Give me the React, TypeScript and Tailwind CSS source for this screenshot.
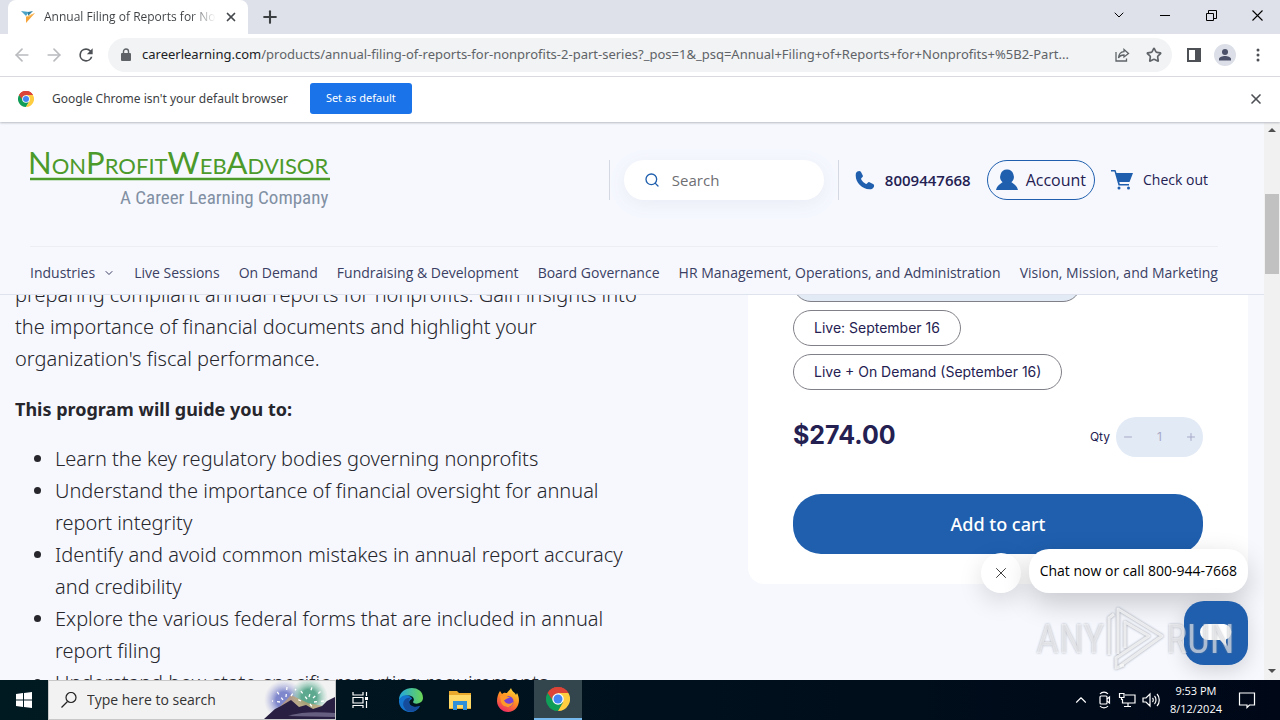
import {
    ArrowLeft,
    ArrowRight,
    ChevronDown,
    ChevronUp,
    Minus,
    Plus,
    Search,
    Star,
    X,
} from "lucide-react";

const navLinks = [
    "Live Sessions",
    "On Demand",
    "Fundraising & Development",
    "Board Governance",
    "HR Management, Operations, and Administration",
    "Vision, Mission, and Marketing",
];

const goals = [
    "Learn the key regulatory bodies governing nonprofits",
    "Understand the importance of financial oversight for annual report integrity",
    "Identify and avoid common mistakes in annual report accuracy and credibility",
    "Explore the various federal forms that are included in annual report filing",
    "Understand how state-specific reporting requirements",
];

function ChromeLogo({ className }: { className: string }) {
    return (
        <svg viewBox="0 0 48 48" className={className} aria-hidden="true">
            <path d="M24 24 3.2 12A24 24 0 0 1 44.8 12Z" fill="#db4437" />
            <path d="M24 24 3.2 12A24 24 0 0 0 24 48L34.4 30Z" fill="#0f9d58" />
            <path d="M24 24 34.4 30 24 48A24 24 0 0 0 44.8 12H24Z" fill="#ffcd40" />
            <path d="M3.2 12 13.6 30 24 24V13Z" fill="#0f9d58" />
            <path d="M3.2 12A24 24 0 0 1 44.8 12H24L13.6 18 13 26Z" fill="#db4437" />
            <circle cx="24" cy="24" r="11.5" fill="#fff" />
            <circle cx="24" cy="24" r="9" fill="#4285f4" />
        </svg>
    );
}

function TabStrip() {
    return (
        <div className="flex h-[34px] shrink-0 items-stretch bg-[#dee1e9] pl-2">
            <div className="flex w-60 items-center rounded-t-lg bg-white pl-3 pr-2">
                <svg viewBox="0 0 16 16" className="size-4 shrink-0" aria-hidden="true">
                    <path d="M1 2 9 3 6 7Z" fill="#4aa3c7" />
                    <path d="M8 3 13 2 8 7Z" fill="#2f7f9f" />
                    <path d="M15 4 6 14V8Z" fill="#f5a43a" />
                    <path d="M5 8 15 4 9 8Z" fill="#fbc26b" />
                </svg>
                <span className="ml-2 w-[172px] overflow-hidden whitespace-nowrap bg-linear-to-r from-[#3c4043] from-85% to-transparent bg-clip-text text-xs text-transparent">
                    Annual Filing of Reports for Nonprofits
                </span>
                <button aria-label="Close tab" className="ml-2 text-[#45494d]">
                    <X className="size-3.5" strokeWidth={3} />
                </button>
            </div>
            <button aria-label="New tab" className="ml-3 text-[#3c4043]">
                <Plus className="size-5" strokeWidth={2.5} />
            </button>
            <div className="ml-auto flex items-center pb-1 text-black">
                <button aria-label="Search tabs" className="flex w-[46px] justify-center">
                    <ChevronDown className="size-4" strokeWidth={1.5} />
                </button>
                <button aria-label="Minimize" className="flex w-[46px] justify-center">
                    <svg viewBox="0 0 10 10" className="size-2.5"><path d="M0 5.5H10" stroke="currentColor" /></svg>
                </button>
                <button aria-label="Restore" className="flex w-[46px] justify-center">
                    <svg viewBox="0 0 11 11" className="size-[11px]" fill="none" stroke="currentColor">
                        <path d="M.5 3.5H7.5V10.5H.5ZM2.5 3V.5H10.5V8.5H8" />
                    </svg>
                </button>
                <button aria-label="Close" className="flex w-[46px] justify-center">
                    <svg viewBox="0 0 11 11" className="size-[11px]"><path d="M.5.5 10.5 10.5M10.5.5.5 10.5" stroke="currentColor" strokeWidth="1.1" /></svg>
                </button>
            </div>
        </div>
    );
}

function AddressBar() {
    return (
        <div className="flex h-[43px] shrink-0 items-center border-b border-[#dcdde0] bg-white px-3 text-[#5f6368]">
            <button aria-label="Back" className="text-[#b9bbbe]"><ArrowLeft className="size-5" strokeWidth={2} /></button>
            <button aria-label="Forward" className="ml-3 text-[#b9bbbe]"><ArrowRight className="size-5" strokeWidth={2} /></button>
            <button aria-label="Reload" className="ml-3">
                <svg viewBox="0 0 24 24" className="size-5" fill="#4d5156" aria-hidden="true">
                    <path d="M17.65 6.35A7.96 7.96 0 0 0 12 4a8 8 0 1 0 7.73 10h-2.08A6 6 0 1 1 12 6c1.66 0 3.14.69 4.22 1.78L13 11h7V4z" />
                </svg>
            </button>
            <div className="ml-3 flex h-[34px] min-w-0 flex-1 items-center rounded-full bg-[#f1f3f4] pl-3 pr-2.5">
                <svg viewBox="0 0 12 14" className="h-3.5 w-3 shrink-0" aria-hidden="true">
                    <path d="M2 5H10Q11 5 11 6V12Q11 13 10 13H2Q1 13 1 12V6Q1 5 2 5Z" fill="#5f6368" />
                    <path d="M3.500 6V3.500A2.500 2.500 0 0 1 8.500 3.500V6" fill="none" stroke="#5f6368" strokeWidth="1.400" />
                </svg>
                <p className="ml-2.5 min-w-0 flex-1 truncate font-['Noto_Sans',sans-serif] text-[13px]">
                    <span className="text-[#202124]">careerlearning.com</span>
                    /products/annual-filing-of-reports-for-nonprofits-2-part-series?_pos=1&amp;_psq=Annual+Filing+of+Reports+for+Nonprofits+%5B2-Part...
                </p>
                <button aria-label="Share" className="ml-4">
                    <svg viewBox="0 0 16 16" className="size-4" fill="none" stroke="currentColor" strokeWidth="1.3">
                        <path d="M2 5V14H12.500V11.500M10 2.500 14.500 6.500 10 10V8C7 8 5.500 9 4.500 11 4.800 7.500 6.500 5 10 4.700Z" />
                    </svg>
                </button>
                <button aria-label="Bookmark" className="ml-4"><Star className="size-4" strokeWidth={2.5} /></button>
            </div>
            <button aria-label="Side panel" className="ml-3.5">
                <svg viewBox="0 0 16 16" className="size-4"><path d="M1 1H15V15H1ZM3 3V13H9V3Z" fill="#4d5156" fillRule="evenodd" /></svg>
            </button>
            <button aria-label="Profile" className="ml-3 flex size-[22px] items-center justify-center rounded-full bg-[#dcdfe8]">
                <svg viewBox="0 0 14 14" className="size-3.5" fill="#4a5168"><circle cx="7" cy="4" r="3" /><path d="M1 12.500V11C1 9 4.500 8 7 8S13 9 13 11V12.500Z" /></svg>
            </button>
            <button aria-label="Menu" className="ml-3">
                <svg viewBox="0 0 20 16" className="h-4 w-5" fill="#4d5156"><circle cx="10" cy="3" r="1.500" /><circle cx="10" cy="8" r="1.500" /><circle cx="10" cy="13" r="1.500" /></svg>
            </button>
        </div>
    );
}

function DefaultBrowserBar() {
    return (
        <div className="relative z-20 flex h-[45px] shrink-0 items-center bg-white pb-0.5 pl-[18px] pr-4 font-['Noto_Sans',sans-serif] text-xs text-[#3c4043] shadow-[0_1px_2px_#b9bbc2]">
            <ChromeLogo className="size-4" />
            <p className="ml-[18px]">Google Chrome isn't your default browser</p>
            <button className="ml-[22px] h-[31px] rounded-[3px] bg-[#1a73e8] px-4 text-[11px] text-white">Set as default</button>
            <button aria-label="Dismiss" className="ml-auto text-[#4d5156]"><X className="size-4" strokeWidth={2.5} /></button>
        </div>
    );
}

function Logo() {
    return (
        <a href="#" aria-label="NonProfitWebAdvisor, A Career Learning Company">
            <svg viewBox="0 0 300 60" className="h-[60px] w-[300px] overflow-visible">
                <text x="-2" y="24" fill="#4c9a2a" fontFamily="Lato" fontSize="22">
                    <tspan fontSize="31">N</tspan>ON<tspan fontSize="31">P</tspan>ROFIT<tspan fontSize="31">W</tspan>EB<tspan fontSize="31">A</tspan>DVISOR
                </text>
                <path d="M0 29H300" stroke="#4c9a2a" strokeWidth="2.500" />
                <text x="90" y="54" fill="#8290a3" fontFamily="'Roboto Condensed', Roboto" fontSize="19">A Career Learning Company</text>
            </svg>
        </a>
    );
}

function Header() {
    return (
        <header className="relative z-10 border-b border-[#dfe3ee] bg-[#f6f8fe] pl-[30px] pr-[46px] text-[#242152]">
            <div className="flex h-[125px] items-start border-b border-[#eceef4] pt-7">
                <Logo />
                <div className="ml-auto mt-2.5 flex h-10 items-center">
                    <div className="flex h-10 items-center border-x border-[#d4d8e2] px-3.5">
                        <label className="flex h-10 w-[200px] items-center rounded-full bg-white px-5 shadow-[0_4px_18px_#e9ecf5]">
                            <Search className="size-4 shrink-0 text-[#1f5fae]" strokeWidth={2} />
                            <input type="search" aria-label="Search" placeholder="Search" className="ml-3 w-full min-w-0 text-[15px] outline-none placeholder:text-[#6e6e73]" />
                        </label>
                    </div>
                    <a href="#" className="ml-4 flex items-center text-[15px] font-semibold">
                        <svg viewBox="0 0 20 20" className="mr-2.5 size-5" fill="#1f5fae" aria-hidden="true">
                            <path d="M1 3C2 1 5 0 6 2L8 6C8 7 6 8 6 9 7 11 9 13 11 14 12 14 13 12 14 12L18 14C20 15 19 18 17 19 8 21-1 12 1 3Z" />
                        </svg>
                        8009447668
                    </a>
                    <a href="#" className="ml-4 flex h-10 items-center rounded-full border border-[#1f5fae] px-2 text-base">
                        <svg viewBox="0 0 20 20" className="mr-2 size-[22px]" fill="#1f5fae" aria-hidden="true">
                            <path d="M10 .5A6 6.500 0 0 1 14 12C16 13.500 19 15 20 19H0C1 15 4 13.500 6 12A6 6.500 0 0 1 10 .5Z" />
                        </svg>
                        Account
                    </a>
                    <a href="#" className="ml-4 mr-2.5 flex items-center text-sm">
                        <svg viewBox="0 0 22 20" className="mr-2.5 h-5 w-[22px]" fill="#1f5fae" aria-hidden="true">
                            <path d="M0 0H4.500L5.500 3H22L18.500 12H8.300L8.800 14H18V15.500H7.500L3.500 1.500H0Z" />
                            <circle cx="8" cy="18" r="1.500" /><circle cx="17.500" cy="18" r="1.500" />
                        </svg>
                        Check out
                    </a>
                </div>
            </div>
            <nav className="flex h-[47px] items-center justify-between whitespace-nowrap pt-1 text-sm text-[#3b3f63]">
                <a href="#" className="flex items-center">
                    Industries <ChevronDown className="ml-2 size-3" strokeWidth={2} />
                </a>
                {navLinks.map((link) => (
                    <a key={link} href="#">{link}</a>
                ))}
            </nav>
        </header>
    );
}

function Description() {
    return (
        <div className="-mt-4 min-w-0 max-w-[640px] flex-1 font-['Noto_Sans',sans-serif] text-[20px] leading-8 font-light text-[#26262c]">
            <p>
                preparing compliant annual reports for nonprofits. Gain insights into the importance of financial
                documents and highlight your organization's fiscal performance.
            </p>
            <p className="mt-[18px] text-lg leading-8 font-bold">This program will guide you to:</p>
            <ul className="mt-[18px] list-disc pl-10">
                {goals.map((goal) => (
                    <li key={goal}>{goal}</li>
                ))}
            </ul>
        </div>
    );
}

function VariantOption({ label, checked }: { label: string; checked?: boolean }) {
    return (
        <label className="flex h-9 items-center rounded-full border border-[#7f8088] px-5 text-sm has-checked:bg-[#e2eaf6]">
            <input type="radio" name="variant" defaultChecked={checked} className="sr-only" />
            {label}
        </label>
    );
}

function PurchaseCard() {
    return (
        <div className="-mt-[29px] w-[500px] shrink-0 self-start rounded-2xl bg-white px-[45px] pb-[30px] font-['Inter',sans-serif] text-[#242152]">
            <div className="flex flex-col items-start gap-2">
                <VariantOption label="On Demand (Available September 16)" checked />
                <VariantOption label="Live: September 16" />
                <VariantOption label="Live + On Demand (September 16)" />
            </div>
            <div className="mt-[27px] flex h-10 items-center">
                <p className="self-start text-[25px] font-bold">$274.00</p>
                <label htmlFor="qty" className="ml-auto text-xs">Qty</label>
                <div className="ml-1.5 flex h-10 w-[87px] items-center justify-between rounded-full bg-[#e2eaf6] px-1.5 text-[#a7a9c8]">
                    <button aria-label="Decrease quantity"><Minus className="size-3" /></button>
                    <input id="qty" defaultValue="1" className="w-6 text-center text-xs outline-none" />
                    <button aria-label="Increase quantity"><Plus className="size-3" /></button>
                </div>
            </div>
            <button className="mt-[37px] h-[60px] w-full rounded-[28px] bg-[#1f5fae] font-['Noto_Sans',sans-serif] text-lg font-medium text-white">Add to cart</button>
        </div>
    );
}

function Watermark() {
    return (
        <svg viewBox="0 0 200 70" className="pointer-events-none absolute bottom-1.5 right-[26px] z-20 h-[70px] w-[200px] overflow-visible drop-shadow-[0_0_1px_#777c88]" aria-hidden="true">
            <g fill="#fff" fillOpacity=".55" fontFamily="'Roboto Condensed', Roboto" fontSize="40">
                <text x="-2" y="49">ANY</text>
                <text x="128" y="49">RUN</text>
            </g>
            <g fill="none" stroke="#fff" strokeOpacity=".75" strokeWidth="3" strokeLinejoin="round">
                <path d="M71 51V14L76 10M80 50V5L124 32 82 62" />
                <path d="M87 44V18L111 32 78 54V64L86 61" />
            </g>
        </svg>
    );
}

function ChatWidget() {
    return (
        <div className="absolute bottom-[15px] right-4 z-10 flex flex-col items-end gap-2 text-black">
            <div className="flex items-end gap-2">
                <button aria-label="Close chat message" className="flex size-10 items-center justify-center rounded-full bg-white shadow-[0_8px_24px_#00000022]">
                    <X className="size-[18px]" strokeWidth={1} />
                </button>
                <p className="flex h-11 items-center rounded-[20px] bg-white px-[11px] text-sm shadow-[0_10px_28px_#00000033]">Chat now or call 800-944-7668</p>
            </div>
            <button aria-label="Open chat" className="flex size-16 items-center justify-center rounded-[20px] bg-[#1f5fae] shadow-[0_6px_20px_#00000026]">
                <svg viewBox="0 0 32 26" className="h-[26px] w-8" fill="#fff">
                    <path d="M8 4H24A8 8 0 0 1 26 19.500L26 26 20 20H8A8 8 0 0 1 8 4Z" />
                </svg>
            </button>
        </div>
    );
}

function Scrollbar() {
    return (
        <div className="flex w-4 shrink-0 flex-col items-center bg-[#f1f1f1]" aria-hidden="true">
            <svg viewBox="0 0 8 4" className="mt-1.5 h-1 w-2" fill="#505050"><path d="M0 4 4 0 8 4Z" /></svg>
            <div className="mt-[62px] h-20 w-3.5 bg-[#c1c1c1]" />
            <svg viewBox="0 0 8 4" className="mb-[7px] mt-auto h-1 w-2" fill="#505050"><path d="M0 0 4 4 8 0Z" /></svg>
        </div>
    );
}

function Taskbar() {
    return (
        <footer className="flex h-10 shrink-0 items-stretch bg-linear-to-r from-[#001a22] to-[#000818] text-white">
            <button aria-label="Start" className="flex w-12 items-center justify-center">
                <svg viewBox="0 0 16 16" className="size-4" fill="#fff"><path d="M0 2 7 1V7.500H0ZM8 1 16 0V7.500H8ZM0 8.500H7V15L0 14ZM8 8.500H16V16L8 15Z" /></svg>
            </button>
            <label className="flex w-72 items-center border border-[#c8c8c8] bg-[#f2f2f2] pl-3 text-[#333]">
                <svg viewBox="0 0 16 16" className="size-4 shrink-0" fill="none" stroke="#222" strokeWidth="1.200">
                    <circle cx="10" cy="5.500" r="5" /><path d="M6.500 9.500.5 15.500" />
                </svg>
                <input type="search" aria-label="Search Windows" placeholder="Type here to search" className="ml-2.5 min-w-0 flex-1 text-sm outline-none placeholder:text-[#333]" />
                <svg viewBox="0 0 72 38" className="h-[38px] w-[72px] shrink-0" aria-hidden="true">
                    <defs>
                        <radialGradient id="violet"><stop offset=".4" stopColor="#7f87cc" /><stop offset="1" stopColor="#b5b8e0" stopOpacity="0" /></radialGradient>
                        <radialGradient id="teal"><stop offset=".4" stopColor="#5da98f" /><stop offset="1" stopColor="#9cd0bf" stopOpacity="0" /></radialGradient>
                    </defs>
                    <circle cx="21" cy="19" r="20" fill="url(#violet)" />
                    <circle cx="46" cy="16" r="19" fill="url(#teal)" />
                    <path d="M8 35 28 14 45 22 60 25 40 32Z" fill="#c5a06f" opacity=".7" />
                    <path d="M20 19 13 9M23 16 24 6M17 21 9 20M28 15 33 8M44 18 37 9M46 16 49 6M50 17 58 10M51 21 61 20M47 23 51 28M38 20 32 17" stroke="#fff" strokeDasharray="3 4" strokeWidth="1.300" />
                    <path d="M1 38 12 28 18 25 28 19 36 26 43 24 50 28 59 25 64 20 72 16V38Z" fill="#291f42" />
                    <path d="M25 35C40 30 57 31 72 32V36Z" fill="#675f80" />
                </svg>
            </label>
            <div className="flex">
                <button aria-label="Task view" className="flex w-12 items-center justify-center">
                    <svg viewBox="0 0 18 18" className="size-[18px]" fill="none" stroke="#fff" strokeWidth="1.200">
                        <path d="M2 1V4H12V1M2 6.500H12V12H2ZM2 17V14.500H12V17M15.500 1V5M15.500 10V17" /><path d="M14 6H17V9H14Z" fill="#fff" stroke="none" />
                    </svg>
                </button>
                <button aria-label="Edge" className="flex w-[54px] items-center justify-center">
                    <svg viewBox="0 0 24 24" className="size-6">
                        <defs>
                            <linearGradient id="edgeTop"><stop stopColor="#22a7df" /><stop offset="1" stopColor="#6bd653" /></linearGradient>
                        </defs>
                        <path d="M0 12C0-3 24-4 24 10 24 16 15 17 14 14 18 8 7 4 0 12Z" fill="url(#edgeTop)" />
                        <path d="M0 12C4 4 13 8 13 11 7 13 11 22 21 18 15 29-1 24 0 12Z" fill="#1475cf" />
                        <path d="M8 23C0 16 6 9 12 9.500 7 14 12 21 21 18 18 23 13 25 8 23Z" fill="#154c9c" />
                    </svg>
                </button>
                <button aria-label="File Explorer" className="flex w-11 items-center justify-center">
                    <svg viewBox="0 0 22 20" className="h-5 w-[22px]">
                        <path d="M0 1H8L10 3H22V19H0Z" fill="#e9a92d" /><path d="M0 5H22V18H0Z" fill="#ffd968" />
                        <path d="M4 11H18V20H14V15H8V20H4Z" fill="#2f8fd9" />
                    </svg>
                </button>
                <button aria-label="Firefox" className="flex w-[52px] items-center justify-center">
                    <svg viewBox="0 0 24 24" className="size-6">
                        <defs>
                            <linearGradient id="fox" x1=".8" y1="0" x2=".3" y2="1"><stop stopColor="#ffdf3a" /><stop offset=".5" stopColor="#ff8a22" /><stop offset="1" stopColor="#ed2864" /></linearGradient>
                        </defs>
                        <path d="M1 13C1 9 2 6 4 3L6 6C8 4 10 5 11 5 12 3 14 2 15 0 16 4 19 4 20 7L21 5C26 14 21 24 12 24 6 24 1 19 1 13Z" fill="url(#fox)" />
                        <circle cx="12" cy="13.500" r="5.500" fill="#7541d5" />
                        <path d="M4 8C8 6 12 8 14 10 10 10 10 12 8 12 9 16 14 17 17 14 17 20 7 21 5 14Z" fill="#ff982a" />
                    </svg>
                </button>
                <button aria-label="Chrome" className="flex w-12 items-center justify-center border-b-2 border-[#76b9ed] bg-[#33464d]">
                    <ChromeLogo className="size-6" />
                </button>
            </div>
            <div className="ml-auto flex items-center">
                <ChevronUp className="size-[18px]" strokeWidth={1.5} />
                <svg viewBox="0 0 16 18" className="ml-1.5 h-[18px] w-4" fill="none" stroke="#fff" strokeWidth="1.200">
                    <path d="M4 3C6 .5 10 .5 12 3M4 15C6 17.500 10 17.500 12 15" /><rect x="4" y="5" width="7" height="8" rx="1" /><path d="M11 8 13.500 6V12L11 10" />
                </svg>
                <svg viewBox="0 0 18 16" className="ml-1.5 h-4 w-[18px]" fill="none" stroke="#fff" strokeWidth="1.200">
                    <path d="M7 3H17V11H4.500V7M10 11V14M6 14.500H13M1.500 1.500H6V5.500H1.500ZM3.500 5.500V8" />
                </svg>
                <svg viewBox="0 0 18 16" className="ml-1.5 h-4 w-[18px]" fill="none" stroke="#fff" strokeWidth="1.200">
                    <path d="M1 6H4L8 2V14L4 10H1ZM10.500 6C11.500 7 11.500 9 10.500 10M12.500 4C14.500 6 14.500 10 12.500 12M15 2C18 5 18 11 15 14" />
                </svg>
                <p className="ml-2.5 text-center text-[11px] leading-[18px]">9:53 PM<br />8/12/2024</p>
                <svg viewBox="0 0 18 18" className="ml-4 mr-6 size-[18px]" fill="none" stroke="#fff" strokeWidth="1.200">
                    <path d="M1.500 2H16.500V14H11.500L9 16.500V14H1.500Z" />
                </svg>
            </div>
        </footer>
    );
}

export default function App() {
    return (
        <div className="flex h-screen flex-col overflow-hidden bg-[#f6f8fe] font-['Open_Sans',sans-serif]">
            <TabStrip />
            <AddressBar />
            <DefaultBrowserBar />
            <div className="flex min-h-0 flex-1">
                <div className="relative flex min-w-0 flex-1 flex-col overflow-hidden">
                    <Header />
                    <main className="flex min-h-0 flex-1 justify-between overflow-hidden pl-[15px] pr-4">
                        <Description />
                        <PurchaseCard />
                    </main>
                    <ChatWidget />
                    <Watermark />
                </div>
                <Scrollbar />
            </div>
            <Taskbar />
        </div>
    );
}
